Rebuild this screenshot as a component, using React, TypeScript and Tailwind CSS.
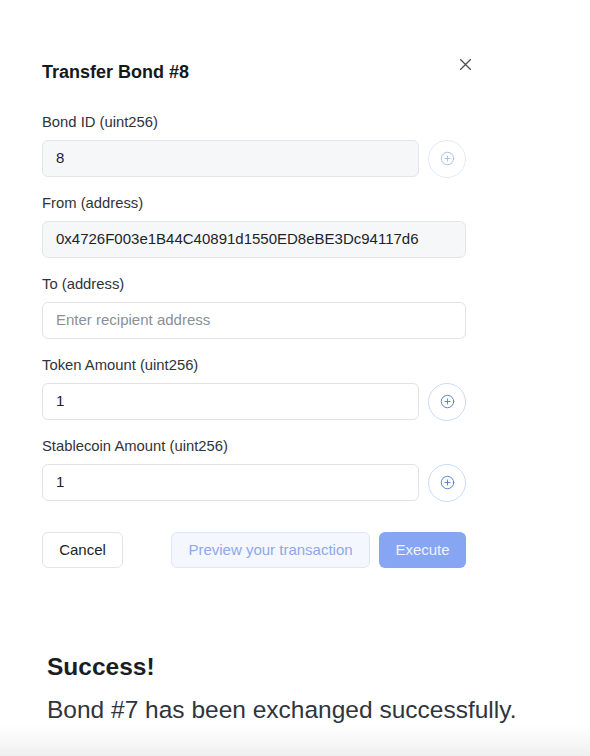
import React from "react";
import { CirclePlus } from "lucide-react";

const font = { fontFamily: '"Liberation Sans", Arial, sans-serif' };

function Label({ children }: { children: React.ReactNode }) {
  return <div className="h-5 whitespace-nowrap leading-5 text-[14.8px] text-[#2f333a]">{children}</div>;
}

function PlusBtn({ disabled }: { disabled?: boolean }) {
  return (
    <div
      className={
        "flex h-[38px] w-[38px] shrink-0 items-center justify-center rounded-full border bg-white " +
        (disabled ? "border-[#e2eaf8]" : "border-[#cbdaf5]")
      }
    >
      <CirclePlus size={15} strokeWidth={1.5} className={disabled ? "text-[#a8bde9]" : "text-[#4f7fd6]"} />
    </div>
  );
}

export default function App() {
  return (
    <div className="flex h-[756px] w-[590px] flex-col overflow-hidden bg-white" style={font}>
      <div className="pl-[42px] pt-[60px]">
        <div className="flex w-[429px] items-start justify-between">
          <div className="h-6 text-[18px] font-bold leading-6 text-[#15181d]">Transfer Bond #8</div>
          <svg width="11" height="11" viewBox="0 0 11 11" className="mt-[-1px]">
            <path d="M0.5 0.5 L10.5 10.5 M10.5 0.5 L0.5 10.5" stroke="#4a4e55" strokeWidth="1.3" strokeLinecap="round" />
          </svg>
        </div>

        <div className="mt-7 flex w-[424px] flex-col gap-4">
          <div className="flex flex-col gap-2">
            <Label>Bond ID (uint256)</Label>
            <div className="flex h-[37px] items-center gap-[9px]">
              <div className="flex h-[37px] w-[377px] items-center rounded-md border border-[#e4e6ea] bg-[#f6f7f9] px-[13px] text-[15px] text-[#1f2328]">
                8
              </div>
              <PlusBtn disabled />
            </div>
          </div>

          <div className="flex flex-col gap-2">
            <Label>From (address)</Label>
            <div className="flex h-[37px] w-[424px] items-center rounded-md border border-[#e4e6ea] bg-[#f6f7f9] px-[13px] text-[15px] text-[#1f2328]">
              0x4726F003e1B44C40891d1550ED8eBE3Dc94117d6
            </div>
          </div>

          <div className="flex flex-col gap-2">
            <Label>To (address)</Label>
            <div className="flex h-[37px] w-[424px] items-center rounded-md border border-[#e1e3e7] bg-white px-[13px] text-[15px] text-[#8a8f98]">
              Enter recipient address
            </div>
          </div>

          <div className="flex flex-col gap-2">
            <Label>Token Amount (uint256)</Label>
            <div className="flex h-[37px] items-center gap-[9px]">
              <div className="flex h-[37px] w-[377px] items-center rounded-md border border-[#e1e3e7] bg-white px-[13px] text-[15px] text-[#1f2328]">
                1
              </div>
              <PlusBtn />
            </div>
          </div>

          <div className="flex flex-col gap-2">
            <Label>Stablecoin Amount (uint256)</Label>
            <div className="flex h-[37px] items-center gap-[9px]">
              <div className="flex h-[37px] w-[377px] items-center rounded-md border border-[#e1e3e7] bg-white px-[13px] text-[15px] text-[#1f2328]">
                1
              </div>
              <PlusBtn />
            </div>
          </div>
        </div>

        <div className="mt-[31px] flex w-[424px] items-center justify-between">
          <div className="flex h-[36px] w-[81px] items-center justify-center rounded-md border border-[#e2e4e8] bg-white text-[15px] text-[#202328]">
            Cancel
          </div>
          <div className="flex items-center gap-[9px]">
            <div className="flex h-[36px] w-[199px] items-center justify-center rounded-md border border-[#dfe8fb] bg-[#f4f7fe] text-[15px] text-[#90a7ee]">
              Preview your transaction
            </div>
            <div className="flex h-[36px] w-[87px] items-center justify-center rounded-md bg-[#86a5f2] text-[15px] text-[#eef3fe]">
              Execute
            </div>
          </div>
        </div>
      </div>

      <div className="mt-[83px] pl-[47px]">
        <div className="text-[24.5px] font-bold leading-8 text-[#1a1d24]">Success!</div>
        <div className="mt-[11px] whitespace-nowrap text-[24.5px] leading-8 text-[#30343d]">Bond #7 has been exchanged successfully.</div>
      </div>

      <div className="flex-1 bg-gradient-to-b from-white to-[#efefef]" />
    </div>
  );
}
